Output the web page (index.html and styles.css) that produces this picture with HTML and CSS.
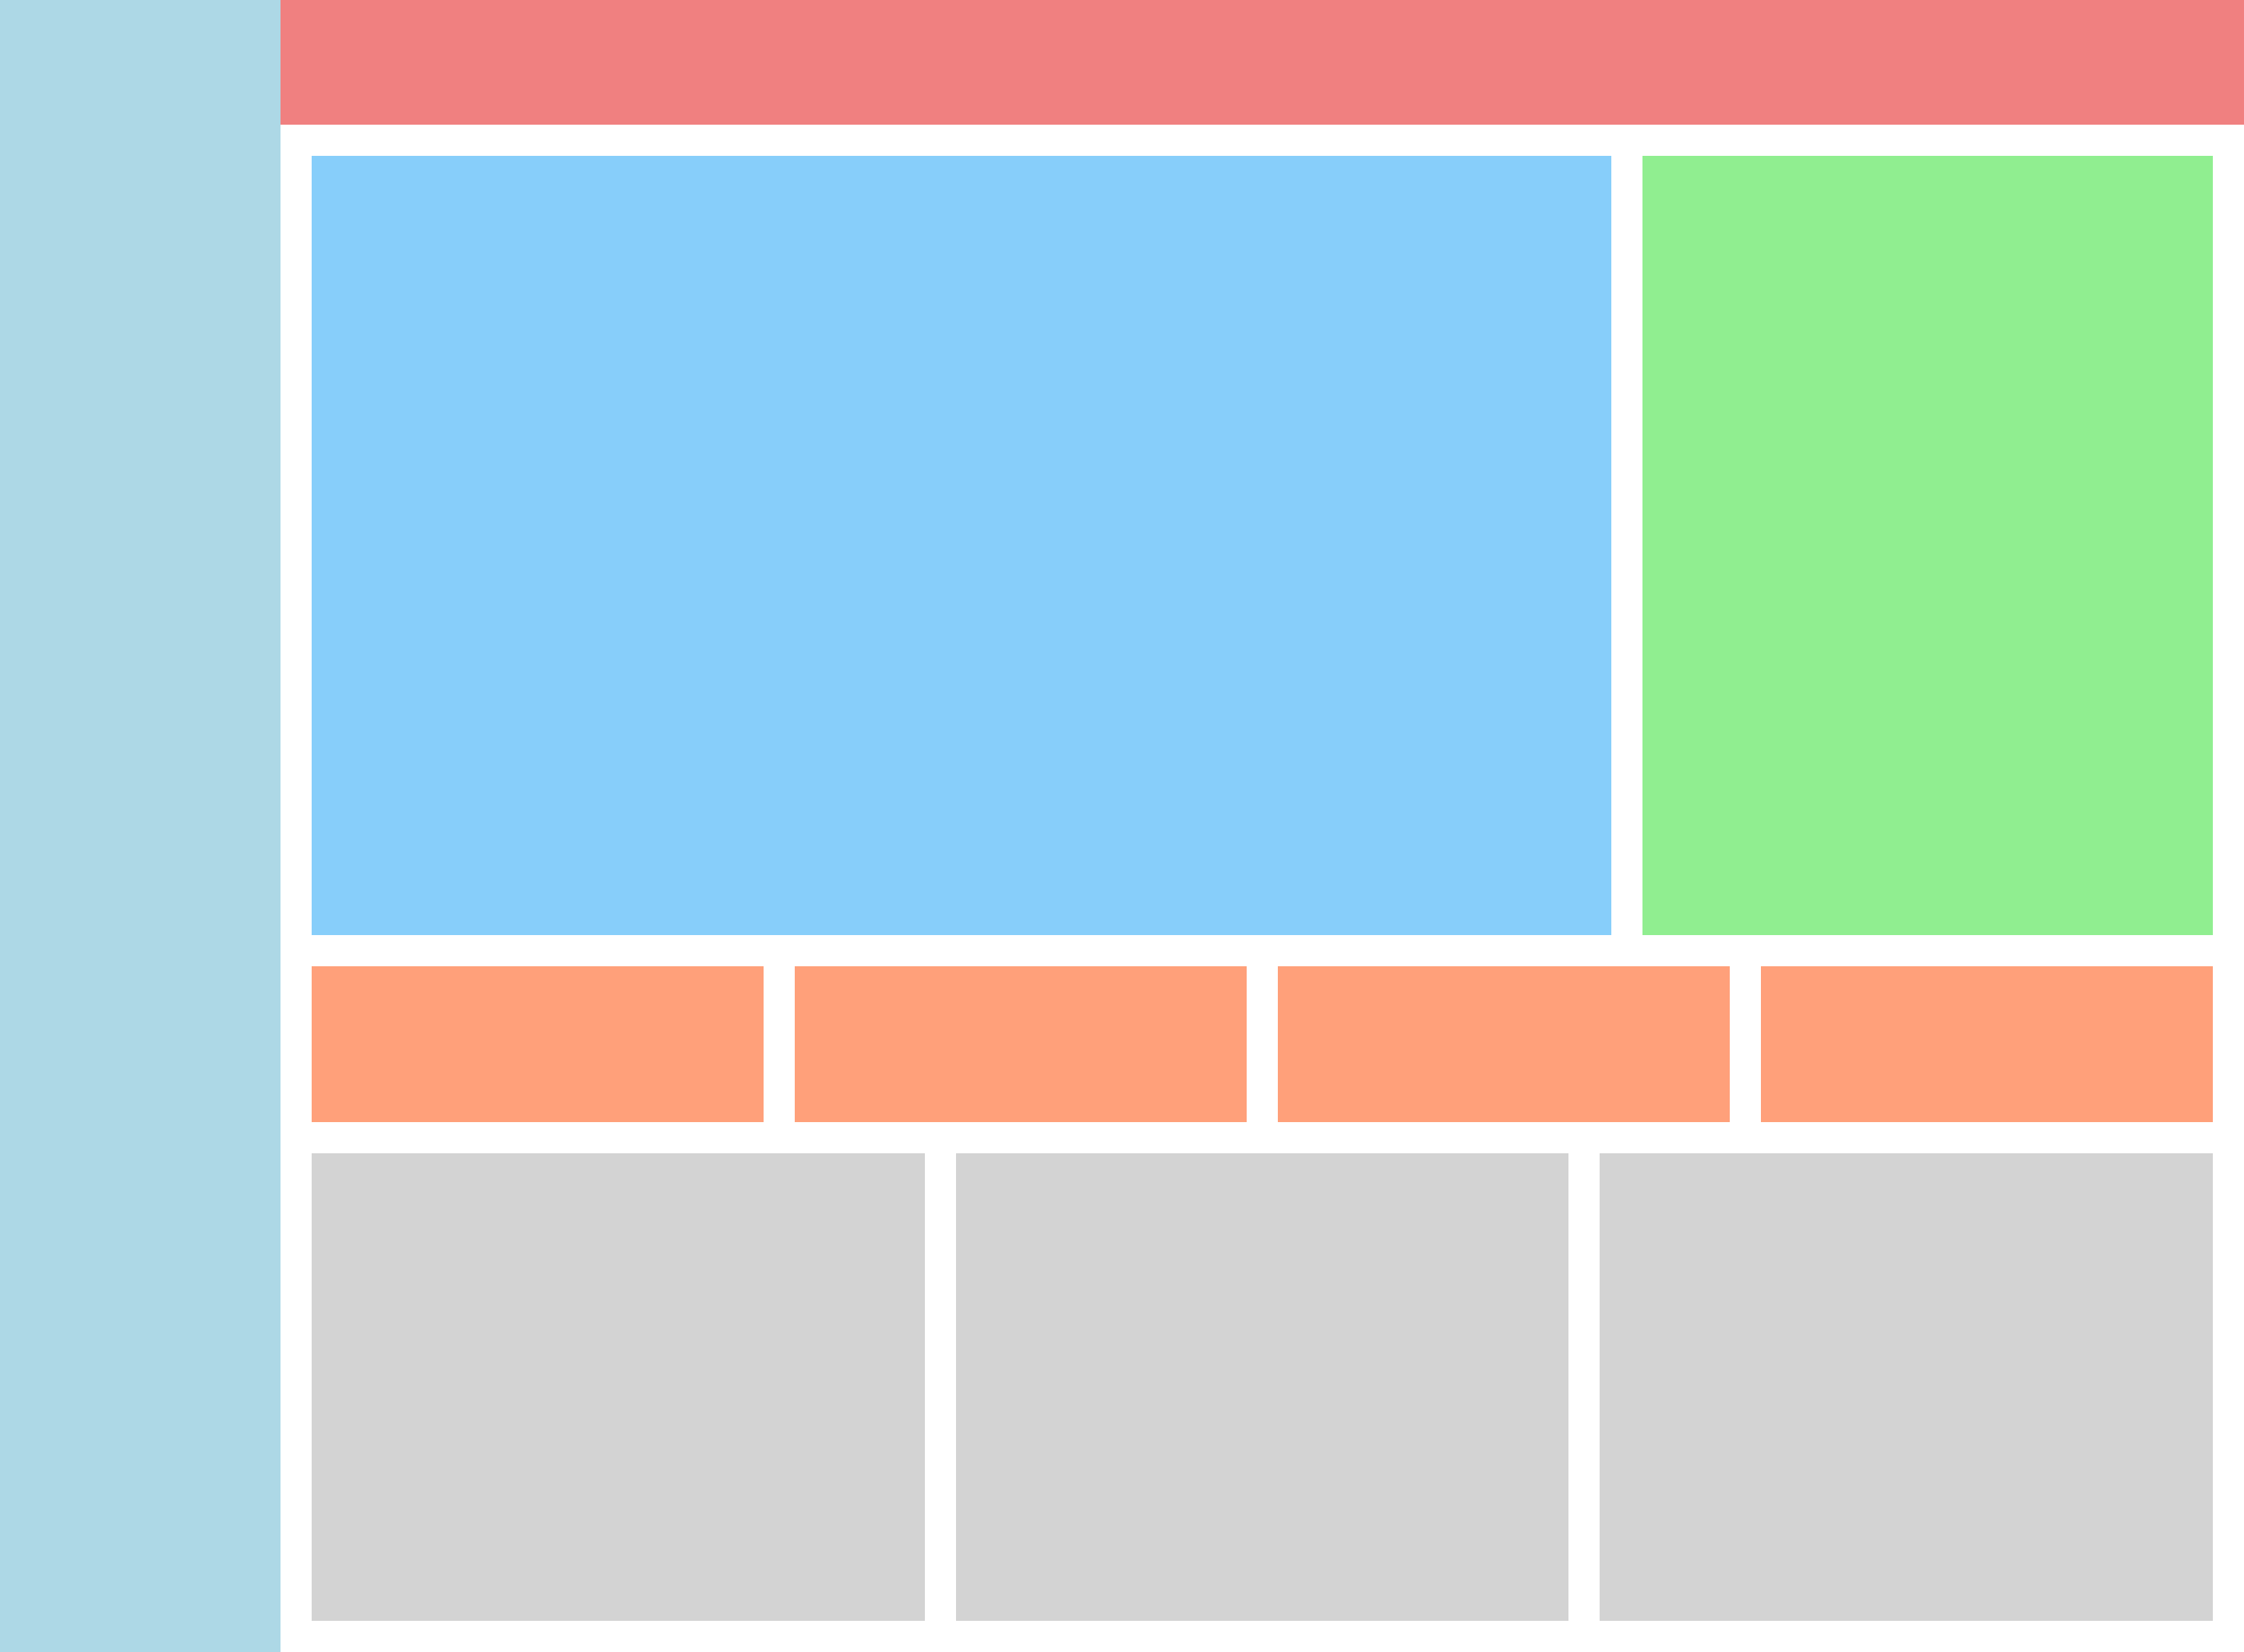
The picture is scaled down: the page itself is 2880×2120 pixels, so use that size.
FILE: index.html
```html
<!DOCTYPE html>
<html lang="en">
<head>
<meta charset="utf-8">
<title>Layout</title>
<link rel="stylesheet" href="styles.css">
</head>
<body>
<div class="app">
  <aside class="sidebar"></aside>
  <div class="main">
    <header class="header"></header>
    <div class="content">
      <div class="row-top">
        <div class="panel-main"></div>
        <div class="panel-side"></div>
      </div>
      <div class="row-stats">
        <div class="stat"></div>
        <div class="stat"></div>
        <div class="stat"></div>
        <div class="stat"></div>
      </div>
      <div class="row-cards">
        <div class="card"></div>
        <div class="card"></div>
        <div class="card"></div>
      </div>
    </div>
  </div>
</div>
</body>
</html>
```
FILE: styles.css
```css
html, body {
  margin: 0;
  padding: 0;
  background: #ffffff;
  font-family: "Liberation Sans", Arial, sans-serif;
}
.app {
  display: flex;
  width: 2880px;
  height: 2120px;
}
.sidebar {
  width: 360px;
  flex: 0 0 360px;
  background: #add8e6;
}
.main {
  flex: 1;
  display: flex;
  flex-direction: column;
}
.header {
  height: 160px;
  background: #f08080;
}
.content {
  flex: 1;
  padding: 40px;
  display: flex;
  flex-direction: column;
  gap: 40px;
}
.row-top {
  display: grid;
  grid-template-columns: 1668fr 732fr;
  gap: 40px;
  height: 1000px;
}
.panel-main {
  background: #87cefa;
}
.panel-side {
  background: #90ee90;
}
.row-stats {
  display: grid;
  grid-template-columns: repeat(4, 1fr);
  gap: 40px;
  height: 200px;
}
.stat {
  background: #ffa07a;
}
.row-cards {
  display: grid;
  grid-template-columns: repeat(3, 1fr);
  gap: 40px;
  height: 600px;
}
.card {
  background: #d3d3d3;
}
```
